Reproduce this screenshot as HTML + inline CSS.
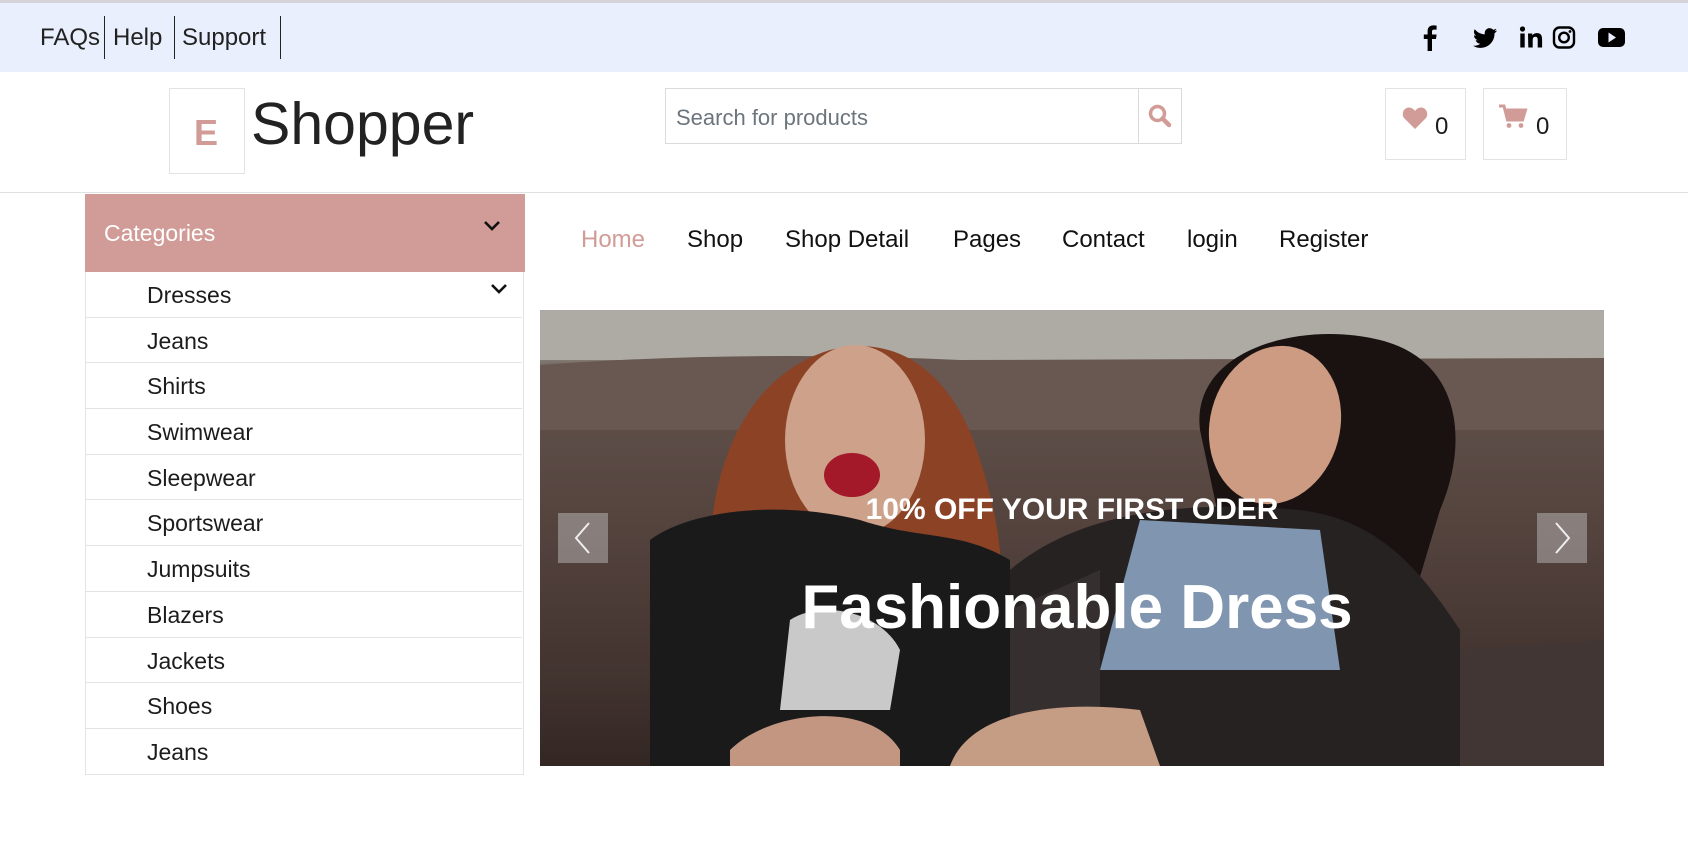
<!DOCTYPE html>
<html><head><meta charset="utf-8"><style>
*{margin:0;padding:0;box-sizing:border-box}
body{width:1688px;height:844px;background:#fff;font-family:"Liberation Sans",sans-serif;position:relative;overflow:hidden;color:#1c1c1c}
.a{position:absolute}
.top{left:0;top:0;width:1688px;height:3px;background:#d4d4d8}
.bar{left:0;top:3px;width:1688px;height:69px;background:#eaeffd}
.tl{font-size:24px;top:24px;color:#222}
.sep{width:1px;background:#222;top:16px;height:43px}
.box{border:1px solid #e3e3e3}
.nav{top:226px;font-size:24px;color:#111}
.cat{left:85px;width:439px;border:1px solid #e3e3e3;border-top:none}
.row{height:45.7px;border-bottom:1px solid #e3e3e3;font-size:23px;padding-left:61px;line-height:46px;width:436px}
.row:last-child{border-bottom:none}
</style></head><body>
<div class="a top"></div>
<div class="a bar"></div>
<div class="a tl" style="left:40px">FAQs</div>
<div class="a sep" style="left:104px"></div>
<div class="a tl" style="left:113px">Help</div>
<div class="a sep" style="left:174px"></div>
<div class="a tl" style="left:182px">Support</div>
<div class="a sep" style="left:280px"></div>
<!-- social -->
<svg class="a" style="left:1420px;top:24px" width="210" height="28" viewBox="0 0 210 28">
<path d="M12 27V15h4l.6-4.5H12V7.8c0-1.3.4-2.2 2.2-2.2h2.4V1.6C16.2 1.5 14.8 1.4 13.3 1.4 9.9 1.4 7.6 3.4 7.6 7.2v3.3H3.8V15h3.8v12z" fill="#000"/>
<path d="M75 6.5c-.9.4-1.8.6-2.8.8 1-.6 1.8-1.5 2.1-2.7-.9.6-2 1-3.1 1.2a4.9 4.9 0 0 0-8.4 4.5c-4.1-.2-7.7-2.2-10.1-5.1-1.4 2.4-.6 5.2 1.5 6.6-.8 0-1.500-.2-2.2-.6 0 2.4 1.7 4.4 3.900 4.9-.7.2-1.5.2-2.2.1.6 2 2.4 3.4 4.6 3.4A9.9 9.9 0 0 1 51 21.7a14 14 0 0 0 21.5-12.4c1-.7 1.8-1.6 2.5-2.5z" fill="#000" transform="translate(2,0)"/>
<g fill="#000"><circle cx="102.5" cy="5" r="2.6"/><rect x="100.3" y="9.5" width="4.4" height="14"/><path d="M108 9.5h4.2v2c.7-1.3 2.3-2.4 4.7-2.4 4.4 0 5.2 2.9 5.2 6.6v7.8h-4.4v-6.9c0-1.7 0-3.800-2.3-3.8s-2.7 1.8-2.7 3.7v7h-4.4z"/></g>
<g fill="none" stroke="#000" stroke-width="2.4"><rect x="134" y="3.5" width="20" height="20" rx="5.5"/><circle cx="144" cy="13.5" r="4.8"/></g><circle cx="150" cy="7.5" r="1.4" fill="#000"/>
<rect x="178" y="4" width="27" height="19" rx="5" fill="#000"/><path d="M188.5 8.5v10l7.5-5z" fill="#eaeffd"/>
</svg>
<!-- logo -->
<div class="a box" style="left:169px;top:88px;width:76px;height:86px"></div>
<div class="a" style="left:194px;top:112px;font-size:36px;font-weight:bold;color:#d19c97">E</div>
<div class="a" style="left:251px;top:90px;font-size:59px;color:#222">Shopper</div>
<!-- search -->
<div class="a box" style="left:665px;top:88px;width:517px;height:56px;border-color:#dadada"></div>
<div class="a" style="left:1138px;top:88px;width:1px;height:56px;background:#dadada"></div>
<div class="a" style="left:676px;top:105px;font-size:22px;color:#6c757d">Search for products</div>
<svg class="a" style="left:1147px;top:103px" width="26" height="26" viewBox="0 0 26 26"><circle cx="10.5" cy="10.5" r="7" fill="none" stroke="#d19c97" stroke-width="3.5"/><path d="M15.5 15.5l6.5 6.5" stroke="#d19c97" stroke-width="4.5" stroke-linecap="round"/></svg>
<!-- icons -->
<div class="a box" style="left:1385px;top:88px;width:81px;height:72px"></div>
<svg class="a" style="left:1402px;top:106px" width="26" height="24" viewBox="0 0 26 24"><path d="M13 23L2.5 12.5C-1 9 1 1.5 7 1.5c3 0 5 2 6 3.5 1-1.5 3-3.5 6-3.5 6 0 8 7.5 4.5 11z" fill="#d19c97"/></svg>
<div class="a" style="left:1435px;top:113px;font-size:24px">0</div>
<div class="a box" style="left:1483px;top:88px;width:84px;height:72px"></div>
<svg class="a" style="left:1498px;top:104px" width="30" height="26" viewBox="0 0 30 26"><path d="M1 2h5l3.5 14h15l3-10H8" fill="none" stroke="#d19c97" stroke-width="3"/><path d="M8 6h19.5l-3 10h-15z" fill="#d19c97"/><circle cx="11" cy="21.5" r="2.4" fill="#d19c97"/><circle cx="23" cy="21.5" r="2.4" fill="#d19c97"/></svg>
<div class="a" style="left:1536px;top:113px;font-size:24px">0</div>
<div class="a" style="left:0;top:192px;width:1688px;height:1px;background:#e0e0e0"></div>
<!-- categories -->
<div class="a" style="left:85px;top:194px;width:440px;height:78px;background:#d19c97"></div>
<div class="a" style="left:104px;top:220px;font-size:23px;color:#fff">Categories</div>
<svg class="a" style="left:482px;top:219px" width="20" height="14" viewBox="0 0 20 14"><path d="M3 3l7 7 7-7" fill="none" stroke="#111" stroke-width="2.6"/></svg>
<div class="a cat" style="top:272px;height:503px">
<div class="row">Dresses</div><div class="row">Jeans</div><div class="row">Shirts</div><div class="row">Swimwear</div><div class="row">Sleepwear</div><div class="row">Sportswear</div><div class="row">Jumpsuits</div><div class="row">Blazers</div><div class="row">Jackets</div><div class="row">Shoes</div><div class="row">Jeans</div>
</div>
<svg class="a" style="left:489px;top:282px" width="20" height="14" viewBox="0 0 20 14"><path d="M3 3l7 7 7-7" fill="none" stroke="#111" stroke-width="2.6"/></svg>
<!-- nav -->
<div class="a nav" style="left:581px;color:#d19c97">Home</div>
<div class="a nav" style="left:687px">Shop</div>
<div class="a nav" style="left:785px">Shop Detail</div>
<div class="a nav" style="left:953px">Pages</div>
<div class="a nav" style="left:1062px">Contact</div>
<div class="a nav" style="left:1187px">login</div>
<div class="a nav" style="left:1279px">Register</div>
<!-- carousel -->
<div class="a" style="left:540px;top:310px;width:1064px;height:456px;overflow:hidden;background:linear-gradient(180deg,#c4c2bb 0%,#a9a49d 9%,#6e5c55 14%,#5d4a44 50%,#4a3a35 80%,#3a2c28 100%)">
<svg width="1064" height="456" viewBox="0 0 1064 456">
<rect x="0" y="0" width="1064" height="50" fill="#c2bfb8"/>
<path d="M0 55 Q200 40 420 50 L1064 48 L1064 120 L0 120z" fill="#74625b"/>
<path d="M180 330 C150 200 190 70 290 40 C370 20 420 80 440 150 C470 240 470 330 430 360 L200 360z" fill="#9b4a2a"/>
<ellipse cx="315" cy="130" rx="70" ry="95" fill="#e6b49a"/>
<ellipse cx="312" cy="165" rx="28" ry="22" fill="#b71c2e"/>
<path d="M110 456 L110 230 C150 200 240 190 320 210 C380 230 420 220 470 250 L470 456z" fill="#1f1d1e"/>
<path d="M250 310 C280 290 340 300 360 340 L350 400 L240 400z" fill="#e0e0e0"/>
<path d="M190 440 C230 400 330 390 360 440 L360 456 L190 456z" fill="#d9a88f"/>
<path d="M660 120 C650 40 760 10 840 30 C920 50 930 130 900 200 L870 300 L690 260z" fill="#1c1514"/>
<ellipse cx="735" cy="115" rx="65" ry="80" fill="#e4ad90" transform="rotate(15 735 115)"/>
<path d="M470 456 L470 260 C540 200 650 190 760 200 C840 210 880 260 920 320 L920 456z" fill="#2b2626"/>
<path d="M600 210 L780 220 L800 360 L560 360z" fill="#8fa6c4"/>
<path d="M470 300 L560 260 L560 456 L470 456z" fill="#3c3536"/>
<path d="M410 456 C430 400 520 390 600 400 L620 456z" fill="#dcae93"/>
<path d="M920 456 L920 340 L1064 330 L1064 456z" fill="#4a3d3a"/>
<rect x="0" y="0" width="1064" height="456" fill="#000" opacity="0.1"/>
</svg>
</div>
<div class="a" style="left:558px;top:513px;width:50px;height:50px;background:rgba(200,200,200,.45)"></div>
<svg class="a" style="left:558px;top:513px" width="50" height="50"><path d="M31 10L18 25l13 15" fill="none" stroke="#eee" stroke-width="2"/></svg>
<div class="a" style="left:1537px;top:513px;width:50px;height:50px;background:rgba(200,200,200,.45)"></div>
<svg class="a" style="left:1537px;top:513px" width="50" height="50"><path d="M19 10l13 15-13 15" fill="none" stroke="#eee" stroke-width="2"/></svg>
<div class="a" style="left:540px;width:1064px;top:493px;text-align:center;font-size:30px;font-weight:bold;color:#fff">10% OFF YOUR FIRST ODER</div>
<div class="a" style="left:545px;width:1064px;top:572px;text-align:center;font-size:62px;font-weight:bold;color:#fff">Fashionable Dress</div>
</body></html>
